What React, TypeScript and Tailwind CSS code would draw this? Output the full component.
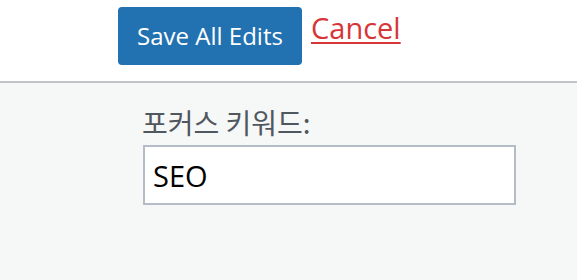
import React from "react";

export default function App() {
  return (
    <div className="w-[577px] h-[280px] bg-[#f6f7f7] overflow-hidden" style={{ fontFamily: '"Open Sans", "Noto Sans", sans-serif' }}>
      <div className="h-[83px] bg-white border-b-2 border-[#c3c4c7] flex items-start pl-[118px] pt-[7px] gap-[9px]">
        <button className="h-[58px] w-[184px] rounded-[4px] bg-[#2271b1] text-white text-[24px] leading-none flex items-center justify-center">
          Save All Edits
        </button>
        <a href="#" className="mt-[6px] text-[29px] leading-none text-[#d63638] underline decoration-2 underline-offset-[3px]">
          Cancel
        </a>
      </div>
      <div className="pl-[142px] pt-[25px] flex flex-col items-start">
        <label className="text-[28px] leading-none text-[#50575e]" style={{ fontFamily: '"Noto Sans CJK KR", "Noto Sans", sans-serif' }}>
          포커스 키워드:
        </label>
        <input
          readOnly
          value="SEO"
          className="ml-[1px] mt-[9px] w-[373px] h-[60px] border-2 border-[#b4bcc8] bg-white pl-[8px] text-[29px] text-black outline-none"
        />
      </div>
    </div>
  );
}
